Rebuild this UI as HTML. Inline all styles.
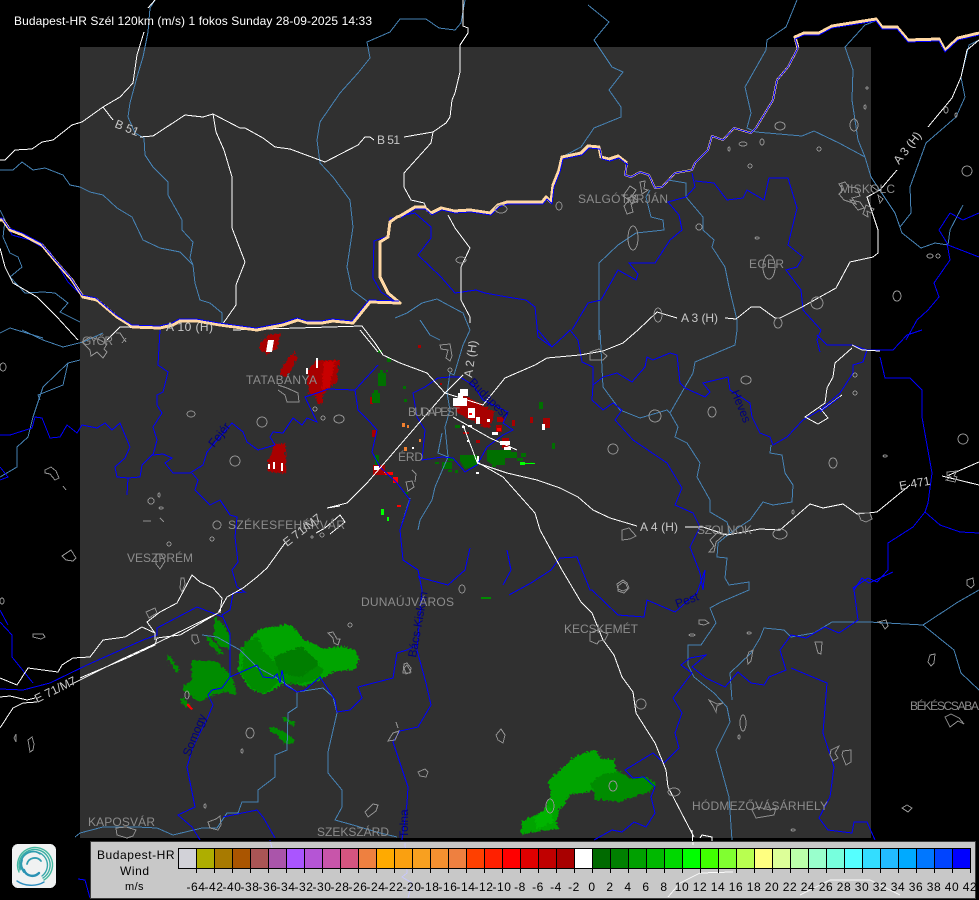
<!DOCTYPE html>
<html><head><meta charset="utf-8"><title>Budapest-HR Szél</title>
<style>
html,body{margin:0;padding:0;background:#000;width:979px;height:900px;overflow:hidden}
#m{position:absolute;left:0;top:0}
text{font-family:"Liberation Sans",sans-serif;font-size:12px}
.s{fill:none;stroke:#4682b4;stroke-width:1}
.b{fill:none;stroke:#0000ff;stroke-width:1}
.w{fill:none;stroke:#fff;stroke-width:1}
.g{fill:none;stroke:#909090;stroke-width:1}
.c{fill:#8c8c8c}
.r{fill:#c8c8c8}
.n{fill:#00007c}
#lg{position:absolute;left:90px;top:841px;width:884px;height:56px;border:1px solid #3c3c3c;background:rgba(255,255,255,.785)}
#lg div{position:absolute;color:#000;font:12px/14px "Liberation Sans",sans-serif;white-space:nowrap}
.ce{top:6px;height:19px;width:17px;border:1px solid #000;border-right:0}
.t{top:26px;width:1px;height:5px;background:#000}
.l{top:38px;width:30px;text-align:center;letter-spacing:.55px}
</style></head><body>
<svg id="m" width="979" height="900" viewBox="0 0 979 900" xmlns="http://www.w3.org/2000/svg" shape-rendering="crispEdges">
<defs><filter id="rough" x="-5%" y="-5%" width="110%" height="110%"><feTurbulence type="turbulence" baseFrequency=".3" numOctaves="1" seed="4" result="n"/><feDisplacementMap in="SourceGraphic" in2="n" scale="5" xChannelSelector="R" yChannelSelector="G"/></filter></defs>
<rect x="80" y="47" width="791" height="791" fill="#303030"/>
<!-- echoes -->
<g filter="url(#rough)">
<g fill="#00a400">
<path d="M237 653L245 640 257 628 270 625 290 623 302 638 322 647 340 645 353 648 358 658 353 668 333 670 320 677 303 685 287 680 277 685 263 693 248 687 237 670Z"/>
<path d="M520 820L533 813 543 808 550 790 545 780 557 770 567 760 578 753 593 748 600 757 613 758 615 772 600 785 590 790 568 793 563 803 557 808 555 820 557 827 533 830 520 833Z"/>
</g>
<g fill="#008c00">
<path d="M243 640L257 636 262 650 272 660 287 652 310 660 322 667 317 677 293 683 277 680 263 692 250 687 240 673Z"/>
<path d="M190 658L215 660 230 673 235 693 223 690 208 695 197 700 180 687 190 678Z"/>
<path d="M213 615L222 623 230 638 227 647 218 645 212 635Z"/>
<path d="M203 633L213 640 222 652 217 653 208 643Z"/>
<path d="M268 727L273 725 282 730 292 737 292 742 283 742 275 733 269 730Z"/>
<path d="M588 782L600 773 617 770 630 777 643 775 655 782 648 790 633 795 617 800 593 798 592 788Z"/>
<path d="M165 655L168 654 178 668 175 671Z"/>
<path d="M178 697L181 696 188 703 184 706Z"/>
<path d="M280 716L283 715 294 722 292 725Z"/>
</g>
<g fill="#007e00"><path d="M272 655L300 645 318 662 300 675 278 672Z"/></g>
<g fill="#00b400"><path d="M533 815L548 805 552 820 535 828Z"/></g>
<g fill="#a80000">
<path d="M258 342L267 333 279 332 275 347 265 353 258 348Z"/>
<path d="M278 373L282 362 293 350 296 357 285 375Z"/>
<path d="M307 392L305 370 315 358 338 359 335 380 322 392 320 402 315 402 315 395Z"/>
<path d="M273 442L284 442 284 472 267 470 267 457Z"/>
<path d="M453 400L460 392 477 402 493 410 488 427 477 423 467 417 455 410Z"/>
</g>
<path fill="#c80000" d="M322 360L334 360 328 385 320 388Z"/>
</g>
<path fill="#008c00" d="M481 597h10v2h-10z"/>
<g fill="#a80000"><path d="M373 465h12v10h-12zM372 430h4v7h-4zM370 397h3v7h-3zM502 438h7v10h-7zM530 417h3v6h-3zM543 418h7v10h-7zM496 425h6v7h-6zM418 345h3v3h-3zM497 417h7v5h-7zM512 420h3v6h-3zM440 383h2v2h-2zM476 440h4v3h-4zM463 432h6v2h-6z"/></g>
<g fill="#fff">
<path d="M268 340L274 340 272 352 266 352Z"/>
<path d="M273 462h2v7h-2zM281 463h2v8h-2zM268 464h2v5h-2zM306 368h2v6h-2zM316 358h2v10h-2z"/>
<path d="M460 389h8v7h-8zM453 398h14v8h-14zM458 393h5v5h-5zM468 408h7v10h-7zM476 417h4v7h-4zM487 419h3v3h-3zM492 432h6v3h-6zM500 441h10v4h-10zM504 447h7v3h-7zM477 456h2v8h-2zM476 472h3v2h-3zM542 424h3v6h-3zM374 466h5v4h-5zM467 440h2v2h-2zM412 447h2v2h-2zM462 426h3v2h-3zM497 452h2v3h-2zM468 425h4v2h-4z"/>
</g>
<g fill="#007000">
<path d="M460 455h17v10l-12 4-5-8zM442 462h10v7h-10zM448 458h6v3h-6zM487 450h24v6h-6v9h-12l-6-4zM503 452h14v6h-14zM378 373h8v13h-8zM380 370h3v3h-3zM372 393h8v10h-8zM374 390h4v3h-4zM375 455h4v10h-4zM378 350h4v3h-4zM404 399h3v3h-3zM495 462h3v3h-3zM521 453h5v4h-5zM539 402h4v7h-4zM552 443h3v6h-3zM387 358h4v4h-4zM403 386h3v3h-3zM405 492h3v2h-3zM435 462h4v2h-4zM455 470h3v3h-3zM517 458h6v3h-6zM455 425h5v3h-5zM448 470h4v2h-4zM530 462h3v2h-3zM492 465h4v2h-4zM386 370h2v2h-2z"/>
</g>
<g fill="#00ff00"><path d="M381 509h3v6h-3zM387 517h2v4h-2zM520 462h5v3h-5zM525 463h10v1h-10z"/></g>
<g fill="#ff0000"><path d="M385 472h8v3h-8zM393 477h5v6h-5zM188 703l5 6-2 1-5-5zM397 505h4v2h-4zM469 413h3v2h-3zM497 428h4v3h-4z"/></g>
<g fill="#f08030"><path d="M402 423h3v4h-3zM407 425h2v3h-2zM419 439h2v3h-2zM404 447h3v4h-3zM384 472h1v1h-1z"/></g>

<!-- steel rivers -->
<g class="s">
<path d="M0 170L13 170 22 162 33 170 45 168 63 175 70 185 80 187 90 192 103 195 117 208 132 217 143 240 160 248 180 252 193 265 195 283 200 300 210 303 222 313 222 325"/>
<path d="M155 0L150 8 148 32 143 57 137 77 130 103 128 117 135 133 144 138 145 155 153 167 168 182 168 195 182 220 182 230 193 242 190 258 193 265"/>
<path d="M465 0L461 23 455 30 439 28 426 19 400 19 390 32 367 42 370 58 358 73 340 93 320 122 317 140 320 163 333 177 350 200 353 227 347 267 352 290 368 302"/>
<path d="M588 5L609 22 594 40 612 67 623 72 609 90 621 107 621 117 594 128 581 147 562 157"/>
<path d="M797 0L786 27 767 40 766 50 745 87 751 113 747 128 756 132 802 136 814 131 839 143 865 157 871 177 895 213 902 233 921 248 935 243 948 245"/>
<path d="M878 20L865 25 845 47 853 70 852 100 858 140 865 157"/>
<path d="M979 40L969 45 961 77 965 97 956 117 926 143 910 187 911 213 900 227"/>
<path d="M948 245L950 230 963 205"/>
<path d="M599 340L599 263 618 245 636 233 664 230 663 220 651 217 646 197 650 190"/>
<path d="M668 180L686 183 686 197 703 217 703 230 714 240 712 247 725 267 729 287 737 320 737 330 735 345 695 362 693 373 670 413 678 427 675 437 687 443 700 463 697 477 710 500 710 512 727 522 730 533 718 543 717 557 727 558 725 578 729 585 749 582 749 590 721 602 710 608 716 623 701 645 688 645 688 665 694 677 714 693 727 707 730 722 716 750 729 797 732 840"/>
<path d="M600 330L603 387 620 410 640 418 667 410 670 413"/>
<path d="M771 445L770 453 782 455 785 473 793 485 792 502 773 505 763 502 750 520 730 533"/>
<path d="M407 313L422 303 437 299 448 305 463 313 470 330 463 345 454 375 450 373 447 393 450 410 445 427 448 457 435 487 432 500 420 520 418 530"/>
<path d="M442 433L438 453 448 457"/>
<path d="M410 498L400 530"/>
<path d="M395 318L407 313M420 320L430 335 440 340"/>
<path d="M202 635L217 637 240 650 257 667 277 678 297 692 323 688 333 697 337 713 328 752 328 773 342 790 342 807 335 820 353 825 380 833 397 837"/>
<path d="M297 692L297 707 288 713 287 750 275 755 275 777 258 790 258 802 242 802 238 813 227 813 217 828 202 828 173 835 157 828 137 827 103 827 80 833 75 837"/>
<path d="M22 330L43 340 63 347 83 342 103 333"/>
<path d="M80 360L68 363 43 387 33 417 28 437 17 447 17 467 0 477"/>
<path d="M68 363L63 385 38 395 40 400"/>
<path d="M0 210L5 220 3 237 10 253 18 257 22 267 10 277 25 293 43 292 55 293 68 303 60 312 80 322"/>
<path d="M0 333L10 328 43 338"/>
<path d="M869 622L832 622 814 633 791 637 784 630 764 628 760 638 751 653 730 673 732 700"/>
<path d="M869 622L923 625 958 602 979 590"/>
<path d="M923 625L954 650 961 673 979 690"/>
</g>

<!-- blue -->
<g class="b">
<path d="M160 330L158 365 168 372 163 392 157 395 157 405 162 413 153 427 157 440 153 455 163 454 172 458 165 463 173 473 190 473 203 465 207 452 232 423 243 432 247 442 258 450 275 445 270 437 273 432 283 433 293 418 302 425 307 418 317 422 305 397 320 392 328 389 355 390 378 365"/>
<path d="M355 390L358 410 370 422 377 430 372 452 380 467 397 483 410 500 400 530 403 560 418 570 422 590 417 650 426 683 431 705 418 727 400 731 393 742 408 787 407 803 402 840"/>
<path d="M0 435L10 435 32 428 35 417 42 418 50 438 60 437 67 425 77 433 82 425 97 428 105 423 112 430 120 423 130 447 125 458 115 467 117 477 128 478 127 495M128 478L140 477 142 465 153 454"/>
<path d="M192 473L198 480 195 490 210 505 220 500 230 515 237 517 235 537 238 562 232 570 237 587 245 592 233 593 230 610 222 615 230 633 230 677 222 688 212 690 208 695 213 705 208 717 193 747 187 767 195 807 178 815 192 827 200 840"/>
<path d="M197 607L157 628 157 635 143 640 87 665 50 683 23 690 0 689"/>
<path d="M33 683L12 657 12 635 0 622"/>
<path d="M197 607L223 617"/>
<path d="M230 677L257 665 263 677 273 678 277 674 280 683 282 670 285 685 297 692 305 690 320 677 335 700 337 712 350 710 362 698 358 687 393 678 397 653 407 650 417 645"/>
<path d="M223 817L257 810 263 817 275 838"/>
<path d="M418 577L448 585 465 570 470 548M503 585L511 570 507 550M509 595L531 583 551 570 560 558 577 557 590 590 592 590 618 615 644 617 647 600 675 612 697 593 705 570 703 590"/>
<path d="M438 378L450 377 460 377 473 385 483 400 508 412 503 423 513 430 503 435 487 447 477 465 465 472 453 458 442 457 422 460 425 430 417 417 413 393 425 387 438 378"/>
<path d="M400 216L415 213 431 227 431 238 418 255 441 277 455 293 476 290 485 293 507 297 526 300 535 307 538 337 552 347"/>
<path d="M538 330L552 347 565 335 570 330 578 340 582 362 593 367 593 385 592 400 603 410 613 403 622 410 615 420 633 440 667 463 682 488 675 505 693 513 700 527 690 547 700 573 703 590"/>
<path d="M572 330L588 303 601 300 618 270 636 280 638 274 629 263 655 263 670 240 682 230 679 215 668 202 686 197 695 187 692 173"/>
<path d="M695 181L714 183 727 200 743 198 747 190 764 200 769 178 788 178 797 208 788 245 803 257 797 267 786 270 801 290 803 310 821 330 817 340 820 352"/>
<path d="M593 385L603 377 617 373 632 382 645 367 647 357 653 360 670 353 677 355 680 383 685 388 705 397 710 392 703 383 728 377 730 390 750 403 752 417 760 433 770 437 773 445 787 437 803 420 820 410 840 393 853 373 853 365 863 362 867 350 852 345 827 345 817 335"/>
<path d="M867 350L893 350 907 335 922 330"/>
<path d="M880 357L885 378 910 378 922 390 922 417 932 473 928 503 925 512 913 527 888 543 888 570 877 582 868 578 853 588 854 590 858 620 839 633 825 627 806 638 791 635 780 650 786 670 769 677 764 685 751 683 738 672 725 687 706 678 692 667 706 655 690 658 681 665 692 673 673 698 682 713 675 733 679 748 664 763 653 753 625 770 633 778 644 777 655 787 651 797 655 813 646 827 634 822 622 832 612 830 594 840"/>
<path d="M925 512L940 525 960 532 979 533"/>
<path d="M854 590L862 578 869 583 893 572"/>
<path d="M791 668L827 683 823 733 834 767 830 797 819 818 828 830 852 833 854 822 867 822 875 840"/>
<path d="M950 213L939 230 947 243 950 260 934 283 939 297 928 310 917 320 906 340"/>
<path d="M948 245L979 257M950 213L963 220 979 213"/>
<path d="M5 222L12 235 30 240 50 252 68 282 82 296"/>
<path d="M270 840L272 848M78 879L85 880 90 898"/>
<path d="M405 843L407 873 402 877 412 883 408 898" opacity=".9"/>
<path d="M0 467L8 477 0 480M0 610L8 625"/>
<path d="M397 218L390 218 388 236 374 241 373 278 381 292 397 303"/>
</g>

<!-- white roads -->
<g class="w">
<path d="M0 160L5 160 15 150 32 149 42 142 53 140 72 125 82 122 103 107 120 97 133 83 137 55 144 32"/>
<path d="M148 8L155 0"/>
<path d="M103 107L113 120"/>
<path d="M140 137L153 136 185 115 203 117 213 114 240 128 245 128 263 138 275 147 290 149 325 162 358 145 365 137 370 137 374 140"/>
<path d="M213 114L216 132 224 150 232 177 232 228 245 262 236 285 236 305 222 325"/>
<path d="M463 0L463 26 468 28 468 33 460 45 460 72 455 93 452 100 450 117 446 123 433 132 404 137"/>
<path d="M433 132L431 143 404 173 404 187 411 200 424 203 426 207M448 215L455 228 470 248 461 267 461 300 470 317 470 323"/>
<path d="M445 393L483 405 505 378 535 365 547 358 580 355 603 351 623 343 638 330 657 312 677 318"/>
<path d="M725 318L736 319 751 307 760 307 775 318 780 318 802 307 836 288 850 262 873 257 878 253 878 230 869 203 867 197 880 190 897 170"/>
<path d="M928 127L952 98 961 77 967 50 979 40"/>
<path d="M0 248L5 267 13 283 37 297 57 317 78 340"/>
<path d="M107 340L120 327 160 328M233 330L362 326 375 343 383 355 400 363 427 373 445 393"/>
<path d="M360 330L378 352"/>
<path d="M445 393L463 375"/>
<path d="M327 508L347 503 367 483 400 445 445 393"/>
<path d="M285 543L267 568 257 577 243 588 227 597 218 613 180 635 157 638 155 645 127 658 80 678"/>
<path d="M218 613L157 643 120 660 70 685"/>
<path d="M37 702L23 703 13 708 0 728"/>
<path d="M0 697L10 696 27 700 35 698"/>
<path d="M0 678L17 685 28 668 43 670 58 672 62 665 73 658 90 657 103 640 125 637 142 627 155 633 155 640"/>
<path d="M155 633L147 622 160 612 177 603 192 575 200 582 213 588 222 598 220 613"/>
<path d="M453 417L490 438 517 450"/>
<path d="M463 425L477 462 503 477 535 513 540 530 562 570 581 602 592 613 603 640 614 655 622 677 633 692 636 713 655 743 666 770 668 787 694 837"/>
<path d="M477 463L507 473 537 480 560 488 570 493 578 497 593 510 610 518 637 526"/>
<path d="M685 527L703 527 727 535 760 529 780 530 810 504 823 508 843 504 857 514 877 512 910 485"/>
<path d="M947 476L979 462M942 476L979 485"/>
<path d="M852 345L862 350 880 351M852 348L835 363 833 377 827 388 825 403 805 417 818 424 828 418 820 408"/>
<path d="M692 830L693 845M700 838L702 835 712 837 712 842"/>
<path d="M668 897L680 883 700 873 733 872" opacity=".9"/>
<path d="M800 895L830 880 870 880 900 895" opacity=".9"/>
<path d="M327 508L340 506M330 534L345 522 340 515 325 528 316 533"/>
</g>

<!-- thick border -->
<g fill="none" stroke-linejoin="round">
<path stroke="#ffd8a4" stroke-width="3" d="M0 220L3 220 10 230 23 235 42 245 57 263 72 280 83 297 97 300 117 317 133 327 160 328 173 325 180 321 197 321 220 325 257 330 283 325 298 320 308 323 322 323 333 321 353 323 370 302 400 303 388 293 380 277 380 242 388 237 390 222 397 217 400 216"/>
<path stroke="#ffd8a4" stroke-width="3" d="M400 216L415 207 424 207 431 213 441 208 454 211 470 210 490 213 498 205 507 202 542 202 546 197 551 202 553 185 559 170 562 157 581 153 588 146 599 147 601 157 609 159 618 156 627 163"/>
<path stroke="#ffd8a4" stroke-width="2" d="M627 163L625 175 631 177 640 172 649 175 655 188 662 187 675 173 692 170 695 163 708 150 712 136 723 140 734 128 751 133 756 128 773 100 777 80 788 67 798 48"/>
<path stroke="#ffd8a4" stroke-width="3" d="M798 48L795 37 804 33 819 33 832 26 876 19 882 27 897 27 908 40 939 39 945 50 958 38 979 33"/>
<path stroke="#0000ff" stroke-width="1" transform="translate(-1 -2)" d="M0 220L3 220 10 230 23 235 42 245 57 263 72 280 83 297 97 300 117 317 133 327 160 328 173 325 180 321 197 321 220 325 257 330 283 325 298 320 308 323 322 323 333 321 353 323 370 302 400 303"/>
<path stroke="#0000ff" stroke-width="1" transform="translate(1 2)" d="M400 216L415 207 424 207 431 213 441 208 454 211 470 210 490 213 498 205 507 202 542 202 546 197 551 202 553 185 559 170 562 157 581 153 588 146 599 147 601 157 609 159 618 156 627 163"/>
<path stroke="#0000ff" stroke-width="1" d="M627 163L625 175 631 177 640 172 649 175 655 188 662 187 675 173 692 170 695 163 708 150 712 136 723 140 734 128 751 133 756 128 773 100 777 80 788 67 798 48"/>
<path stroke="#0000ff" stroke-width="1" transform="translate(0 2)" d="M798 46L795 37 804 33 819 33 832 26 876 19 882 27 897 27 908 40 939 39 945 50 958 38 979 33"/>
</g>
<path fill="none" stroke="#fff" d="M822 410L842 395"/>
<path fill="none" stroke="#0000ff" d="M820 412L840 397"/>

<!-- settlements -->
<g class="g">
<ellipse cx="559" cy="206" rx="3" ry="4"/><ellipse cx="780" cy="126" rx="5" ry="4"/><ellipse cx="743" cy="144" rx="4" ry="2"/><ellipse cx="762" cy="142" rx="2" ry="3"/><ellipse cx="729" cy="149" rx="1" ry="2"/><ellipse cx="750" cy="166" rx="2" ry="2"/><ellipse cx="819" cy="149" rx="2" ry="2"/><ellipse cx="854" cy="125" rx="4" ry="6"/><ellipse cx="699" cy="227" rx="3" ry="3"/><ellipse cx="633" cy="238" rx="5" ry="12"/><ellipse cx="461" cy="260" rx="5" ry="3"/><ellipse cx="658" cy="315" rx="4" ry="7"/><ellipse cx="778" cy="323" rx="4" ry="5"/><ellipse cx="817" cy="303" rx="6" ry="6"/><ellipse cx="897" cy="296" rx="4" ry="5"/><ellipse cx="967" cy="171" rx="5" ry="5"/><ellipse cx="930" cy="256" rx="3" ry="2"/><ellipse cx="938" cy="256" rx="2" ry="2"/><ellipse cx="769" cy="267" rx="6" ry="12"/><ellipse cx="757" cy="238" rx="2" ry="1"/><ellipse cx="946" cy="110" rx="2" ry="3"/><ellipse cx="956" cy="115" rx="1" ry="2"/><ellipse cx="867" cy="88" rx="1" ry="1"/><ellipse cx="865" cy="107" rx="1" ry="2"/><ellipse cx="501" cy="209" rx="6" ry="4"/>
<path d="M630 186l6 4-4 6 6 5-7 3 2 8-6 2-3-8 5-6-6-4zM640 182l5-1-1 8 4 1-6 4zM636 195l-8 3 4 6z"/>
<path d="M839 184l6-2 4 5 8 1 3 8-8 2 4 6-12-4-5-6 4-4zM850 200l10 2 4 6-6 2zM866 205l8 4-3 4-4-2 1 6-5-3zM878 195l5 4-3 4zM842 190l-3 5M870 185l8 6"/>
<ellipse cx="746" cy="380" rx="5" ry="4"/><ellipse cx="712" cy="412" rx="4" ry="5"/><ellipse cx="655" cy="416" rx="6" ry="6"/><path d="M590 352l9-3 8 7-4 4h-13z"/><ellipse cx="613" cy="449" rx="5" ry="5"/><ellipse cx="833" cy="463" rx="4" ry="5"/><ellipse cx="885" cy="456" rx="2" ry="1"/><ellipse cx="963" cy="439" rx="5" ry="5"/><path d="M622 530l7-2 7 8-6 3-8 1z"/><ellipse cx="780" cy="534" rx="7" ry="5"/><path d="M858 513l12 0 2 6-6 3-5-2z"/><ellipse cx="855" cy="393" rx="2" ry="2"/><ellipse cx="855" cy="375" rx="2" ry="2"/><ellipse cx="793" cy="512" rx="1" ry="2"/><path d="M947 472l10-1-3 5 3 1-2 5-9-2 5-3-4-2z"/><path d="M710 540l7-7 7 2-8 7-2 10-5 0 5-6z"/><path d="M617 584l6-4 4 3 2 5-6 3-5-2z"/>
<ellipse cx="191" cy="414" rx="4" ry="3"/><ellipse cx="262" cy="422" rx="5" ry="5"/><ellipse cx="235" cy="461" rx="5" ry="5"/><ellipse cx="339" cy="419" rx="5" ry="4"/><ellipse cx="323" cy="418" rx="2" ry="2"/><ellipse cx="315" cy="409" rx="2" ry="2"/>
<path d="M278 385L287 388 298 393 299 402 287 402 285 395 278 390"/>
<path d="M45 470l6-3 5 4 3 7 -4 2-5-6-5-1zM63 486l3 4"/><ellipse cx="3" cy="367" rx="3" ry="4"/><ellipse cx="151" cy="501" rx="3" ry="3"/><ellipse cx="159" cy="495" rx="1" ry="2"/><ellipse cx="161" cy="508" rx="2" ry="1"/><path d="M143 521h8M160 518l4 4"/><ellipse cx="169" cy="544" rx="2" ry="2"/><ellipse cx="217" cy="525" rx="4" ry="4"/><ellipse cx="212" cy="539" rx="2" ry="2"/><path d="M62 556l9-6 5 8-3 3-7-1z"/><path d="M156 554l5 0 4 7-5 8-4-5z"/><ellipse cx="312" cy="537" rx="1" ry="1"/><ellipse cx="322" cy="535" rx="2" ry="2"/><path d="M181 578l3 0 1 6-3 8-2-4zM146 612l9-4 2 5-8 5z"/><ellipse cx="350" cy="625" rx="2" ry="2"/>
<path d="M82 342l8-5 10 3 7 4-3 5 3 3-4 6-6-6-6 4-1-6zM116 333l4 0 6 9M122 343l4-5"/><ellipse cx="2" cy="601" rx="2" ry="3"/>
<path d="M33 634l10 0 2 3-4 2-8-2z"/><path d="M192 635l5 0 2 7-4 2-3-4z"/><path d="M14 738l2-4 0 8zM28 740l4-3 2 7-1 6-3 2-1-6z"/><path d="M328 633l5-1 4 7 3 0-2 6-4-2-1-5z"/><ellipse cx="250" cy="733" rx="4" ry="5"/><ellipse cx="242" cy="751" rx="1" ry="2"/><path d="M404 664l3-1 4 5-1 5-7 0z"/><path d="M365 812l8-8 5 1-2 6-8 6z"/><path d="M208 822l8-3 4-3 1 9-3 5-8-2z"/><path d="M116 828l10-1 10 3-3 6-6 2-10-3z"/><path d="M393 733l6-2-4 9-7 1zM396 722l2 6"/><ellipse cx="187" cy="695" rx="2" ry="4"/><ellipse cx="205" cy="806" rx="1" ry="2"/>
<path d="M618 586l5-4 3 2 2 5-4 4-6-2z"/><ellipse cx="462" cy="589" rx="3" ry="4"/><path d="M590 633l8-3 10 4-3 6-6 1-2 3-7-3z"/><path d="M699 620l6 0 4 3-5 2-5-1z"/><ellipse cx="692" cy="635" rx="3" ry="1"/><ellipse cx="749" cy="633" rx="2" ry="1"/><path d="M749 652l4-2-2 11-3 3-1-7z"/><path d="M815 642l7 0-1 12-3-1z"/><path d="M930 655l5-1-1 9-3 3-3-4z"/><path d="M967 580l6-2 1 7-3 3-4-3z"/><path d="M878 622l8-2 2 6-3 3-3-5z"/><ellipse cx="641" cy="704" rx="5" ry="5"/><path d="M709 700l8 4 6-1-6 3-1 6-3-6z"/><ellipse cx="743" cy="723" rx="3" ry="8"/><path d="M496 735l5-6 4 6-2 8-5-3z"/><path d="M418 772l7-3 3 3-2 5-6-1z"/><ellipse cx="674" cy="792" rx="6" ry="4"/><path d="M831 750l8-4-4 7 3 5-5 3-3-6z"/><path d="M843 751l8-1 0 12-5 3-4-10z"/><path d="M752 810l6-3 12 3 6-2-2 7-18 3z"/><path d="M902 808l5-3 5 3-4 4z"/><path d="M945 717l6-3 8 4 5 6-6-3-8 6z"/><ellipse cx="613" cy="786" rx="4" ry="5"/><ellipse cx="550" cy="806" rx="4" ry="7"/><path d="M404 668l3-3 4 7-5 2z"/><ellipse cx="793" cy="830" rx="2" ry="1"/><ellipse cx="739" cy="737" rx="1" ry="2"/><ellipse cx="450" cy="370" rx="2" ry="2"/><path d="M440 345l10-1 2 12-2 5-4-3 2-8-7-1z"/><path d="M412 470l4 4-1 8M406 482l6-1 2 6-6 4z"/>
</g>

<!-- dark county names -->
<g class="n">
<text transform="translate(677 608) rotate(-20)">Pest</text>
<text transform="translate(190 757) rotate(-68)">Somogy</text>
<text transform="translate(408 838) rotate(-90)">Tolna</text>
<text transform="translate(214 448) rotate(-52)">Fejér</text>
<text transform="translate(416 658) rotate(-80)">Bács-Kiskun</text>
<text transform="translate(731 392) rotate(68)">Heves</text>
<text transform="translate(468 383) rotate(45)">Budapest</text>
</g>

<!-- city labels -->
<g class="c">
<text x="578" y="203" textLength="90">SALGÓTARJÁN</text>
<text x="840" y="193" textLength="55">MISKOLC</text>
<text x="749" y="268" textLength="35">EGER</text>
<text x="246" y="384" textLength="71">TATABÁNYA</text>
<text x="408" y="416" textLength="52">BUDAPEST</text>
<text x="398" y="461" textLength="25">ÉRD</text>
<text x="228" y="529" textLength="117">SZÉKESFEHÉRVÁR</text>
<text x="127" y="562" textLength="66">VESZPRÉM</text>
<text x="361" y="606" textLength="93">DUNAÚJVÁROS</text>
<text x="564" y="633" textLength="74">KECSKEMÉT</text>
<text x="88" y="826" textLength="67">KAPOSVÁR</text>
<text x="317" y="836" textLength="72">SZEKSZÁRD</text>
<text x="692" y="810" textLength="136">HÓDMEZŐVÁSÁRHELY</text>
<text x="910" y="710" textLength="69">BÉKÉSCSABA</text>
<text x="697" y="534" textLength="55">SZOLNOK</text>
<text x="82" y="345" textLength="31">GYŐR</text>
</g>
<!-- road labels -->
<g class="r">
<text x="681" y="322" textLength="37">A 3 (H)</text>
<text x="640" y="531" textLength="38">A 4 (H)</text>
<text x="166" y="331" textLength="47">A 10 (H)</text>
<text x="377" y="144" textLength="23">B 51</text>
<text transform="translate(114 127) rotate(22)">B 51</text>
<text transform="translate(899 165) rotate(-52)">A 3 (H)</text>
<text transform="translate(472 378) rotate(-82)">A 2 (H)</text>
<text transform="translate(900 490) rotate(-10)">E 471</text>
<text transform="translate(37 703) rotate(-26)">E 71/M7</text>
<text transform="translate(287 547) rotate(-38)">E 71/M7</text>
</g>
<text x="14" y="25" fill="#fff" textLength="358">Budapest-HR Szél 120km (m/s) 1 fokos Sunday 28-09-2025 14:33</text>

<!-- logo -->
<rect x="12" y="844" width="44" height="44" rx="6" fill="#f0f2f2"/>
<g fill="none" stroke-linecap="round" shape-rendering="auto">
<path d="M19 872A17.5 17.5 0 1 1 44 880" stroke="#45b8a0" stroke-width="1.4"/>
<path d="M20 870A15.5 15.5 0 1 1 43 878" stroke="#3cb0a4" stroke-width="1.4"/>
<path d="M21 869A13.5 13.5 0 1 1 42 876" stroke="#35a6aa" stroke-width="1.4"/>
<path d="M23 869A11.5 11.5 0 0 1 40 854" stroke="#2f9cb0" stroke-width="1.4"/>
<path d="M24 872A12 12 0 0 1 22 860" stroke="#2f9cb0" stroke-width="2"/>
<path d="M27 864A8 8 0 0 1 41 861" stroke="#2f9cb0" stroke-width="1.8"/>
<path d="M24 870C26 876 34 878 39 873" stroke="#2a92b4" stroke-width="2.4"/>
<path d="M17 881C24 886 36 887 44 882" stroke="#2f8fc0" stroke-width="1.4"/>
</g>
</svg>

<div id="lg">
<div style="left:6px;top:6px;letter-spacing:.55px">Budapest-HR</div>
<div style="left:29px;top:22px;letter-spacing:.55px">Wind</div>
<div style="left:34px;top:38px;font-size:11px;letter-spacing:.4px">m/s</div>

<div class="ce" style="left:87px;background:#d2d2d8"></div><div class="ce" style="left:105px;background:#aeae00"></div><div class="ce" style="left:123px;background:#a87a00"></div><div class="ce" style="left:141px;background:#aa5500"></div><div class="ce" style="left:159px;background:#aa5555"></div><div class="ce" style="left:177px;background:#aa55aa"></div><div class="ce" style="left:195px;background:#aa55ff"></div><div class="ce" style="left:213px;background:#b555d5"></div><div class="ce" style="left:231px;background:#c855aa"></div><div class="ce" style="left:249px;background:#d55580"></div><div class="ce" style="left:267px;background:#ee8040"></div><div class="ce" style="left:285px;background:#ffaa00"></div><div class="ce" style="left:303px;background:#faa010"></div><div class="ce" style="left:321px;background:#f8a020"></div><div class="ce" style="left:339px;background:#f59030"></div><div class="ce" style="left:357px;background:#ee8040"></div><div class="ce" style="left:375px;background:#ff4000"></div><div class="ce" style="left:393px;background:#ff2000"></div><div class="ce" style="left:411px;background:#ff0000"></div><div class="ce" style="left:429px;background:#e00000"></div><div class="ce" style="left:447px;background:#c00000"></div><div class="ce" style="left:465px;background:#a80000"></div><div class="ce" style="left:483px;background:#ffffff"></div><div class="ce" style="left:501px;background:#006a00"></div><div class="ce" style="left:519px;background:#008000"></div><div class="ce" style="left:537px;background:#00a000"></div><div class="ce" style="left:555px;background:#00b800"></div><div class="ce" style="left:573px;background:#00d800"></div><div class="ce" style="left:591px;background:#00ff00"></div><div class="ce" style="left:609px;background:#40ff00"></div><div class="ce" style="left:627px;background:#80ff30"></div><div class="ce" style="left:645px;background:#b8ff50"></div><div class="ce" style="left:663px;background:#ffff80"></div><div class="ce" style="left:681px;background:#ddff99"></div><div class="ce" style="left:699px;background:#bbffaa"></div><div class="ce" style="left:717px;background:#99ffcc"></div><div class="ce" style="left:735px;background:#77ffdd"></div><div class="ce" style="left:753px;background:#55ffff"></div><div class="ce" style="left:771px;background:#33ddff"></div><div class="ce" style="left:789px;background:#22bbff"></div><div class="ce" style="left:807px;background:#00aaff"></div><div class="ce" style="left:825px;background:#0077ff"></div><div class="ce" style="left:843px;background:#0044ff"></div><div class="ce" style="left:861px;background:#0000ff"></div>
<div style="left:879px;top:6px;width:1px;height:21px;background:#000"></div>
<div style="left:87px;top:26px;width:793px;height:1px;background:#000"></div>

<div class="t" style="left:105px"></div><div class="t" style="left:123px"></div><div class="t" style="left:141px"></div><div class="t" style="left:159px"></div><div class="t" style="left:177px"></div><div class="t" style="left:195px"></div><div class="t" style="left:213px"></div><div class="t" style="left:231px"></div><div class="t" style="left:249px"></div><div class="t" style="left:267px"></div><div class="t" style="left:285px"></div><div class="t" style="left:303px"></div><div class="t" style="left:321px"></div><div class="t" style="left:339px"></div><div class="t" style="left:357px"></div><div class="t" style="left:375px"></div><div class="t" style="left:393px"></div><div class="t" style="left:411px"></div><div class="t" style="left:429px"></div><div class="t" style="left:447px"></div><div class="t" style="left:465px"></div><div class="t" style="left:483px"></div><div class="t" style="left:501px"></div><div class="t" style="left:519px"></div><div class="t" style="left:537px"></div><div class="t" style="left:555px"></div><div class="t" style="left:573px"></div><div class="t" style="left:591px"></div><div class="t" style="left:609px"></div><div class="t" style="left:627px"></div><div class="t" style="left:645px"></div><div class="t" style="left:663px"></div><div class="t" style="left:681px"></div><div class="t" style="left:699px"></div><div class="t" style="left:717px"></div><div class="t" style="left:735px"></div><div class="t" style="left:753px"></div><div class="t" style="left:771px"></div><div class="t" style="left:789px"></div><div class="t" style="left:807px"></div><div class="t" style="left:825px"></div><div class="t" style="left:843px"></div><div class="t" style="left:861px"></div><div class="t" style="left:879px"></div>

<div class="l" style="left:90px">-64</div><div class="l" style="left:108px">-42</div><div class="l" style="left:126px">-40</div><div class="l" style="left:144px">-38</div><div class="l" style="left:162px">-36</div><div class="l" style="left:180px">-34</div><div class="l" style="left:198px">-32</div><div class="l" style="left:216px">-30</div><div class="l" style="left:234px">-28</div><div class="l" style="left:252px">-26</div><div class="l" style="left:270px">-24</div><div class="l" style="left:288px">-22</div><div class="l" style="left:306px">-20</div><div class="l" style="left:324px">-18</div><div class="l" style="left:342px">-16</div><div class="l" style="left:360px">-14</div><div class="l" style="left:378px">-12</div><div class="l" style="left:396px">-10</div><div class="l" style="left:414px">-8</div><div class="l" style="left:432px">-6</div><div class="l" style="left:450px">-4</div><div class="l" style="left:468px">-2</div><div class="l" style="left:486px">0</div><div class="l" style="left:504px">2</div><div class="l" style="left:522px">4</div><div class="l" style="left:540px">6</div><div class="l" style="left:558px">8</div><div class="l" style="left:576px">10</div><div class="l" style="left:594px">12</div><div class="l" style="left:612px">14</div><div class="l" style="left:630px">16</div><div class="l" style="left:648px">18</div><div class="l" style="left:666px">20</div><div class="l" style="left:684px">22</div><div class="l" style="left:702px">24</div><div class="l" style="left:720px">26</div><div class="l" style="left:738px">28</div><div class="l" style="left:756px">30</div><div class="l" style="left:774px">32</div><div class="l" style="left:792px">34</div><div class="l" style="left:810px">36</div><div class="l" style="left:828px">38</div><div class="l" style="left:846px">40</div><div class="l" style="left:864px">42</div>
</div>
</body></html>
